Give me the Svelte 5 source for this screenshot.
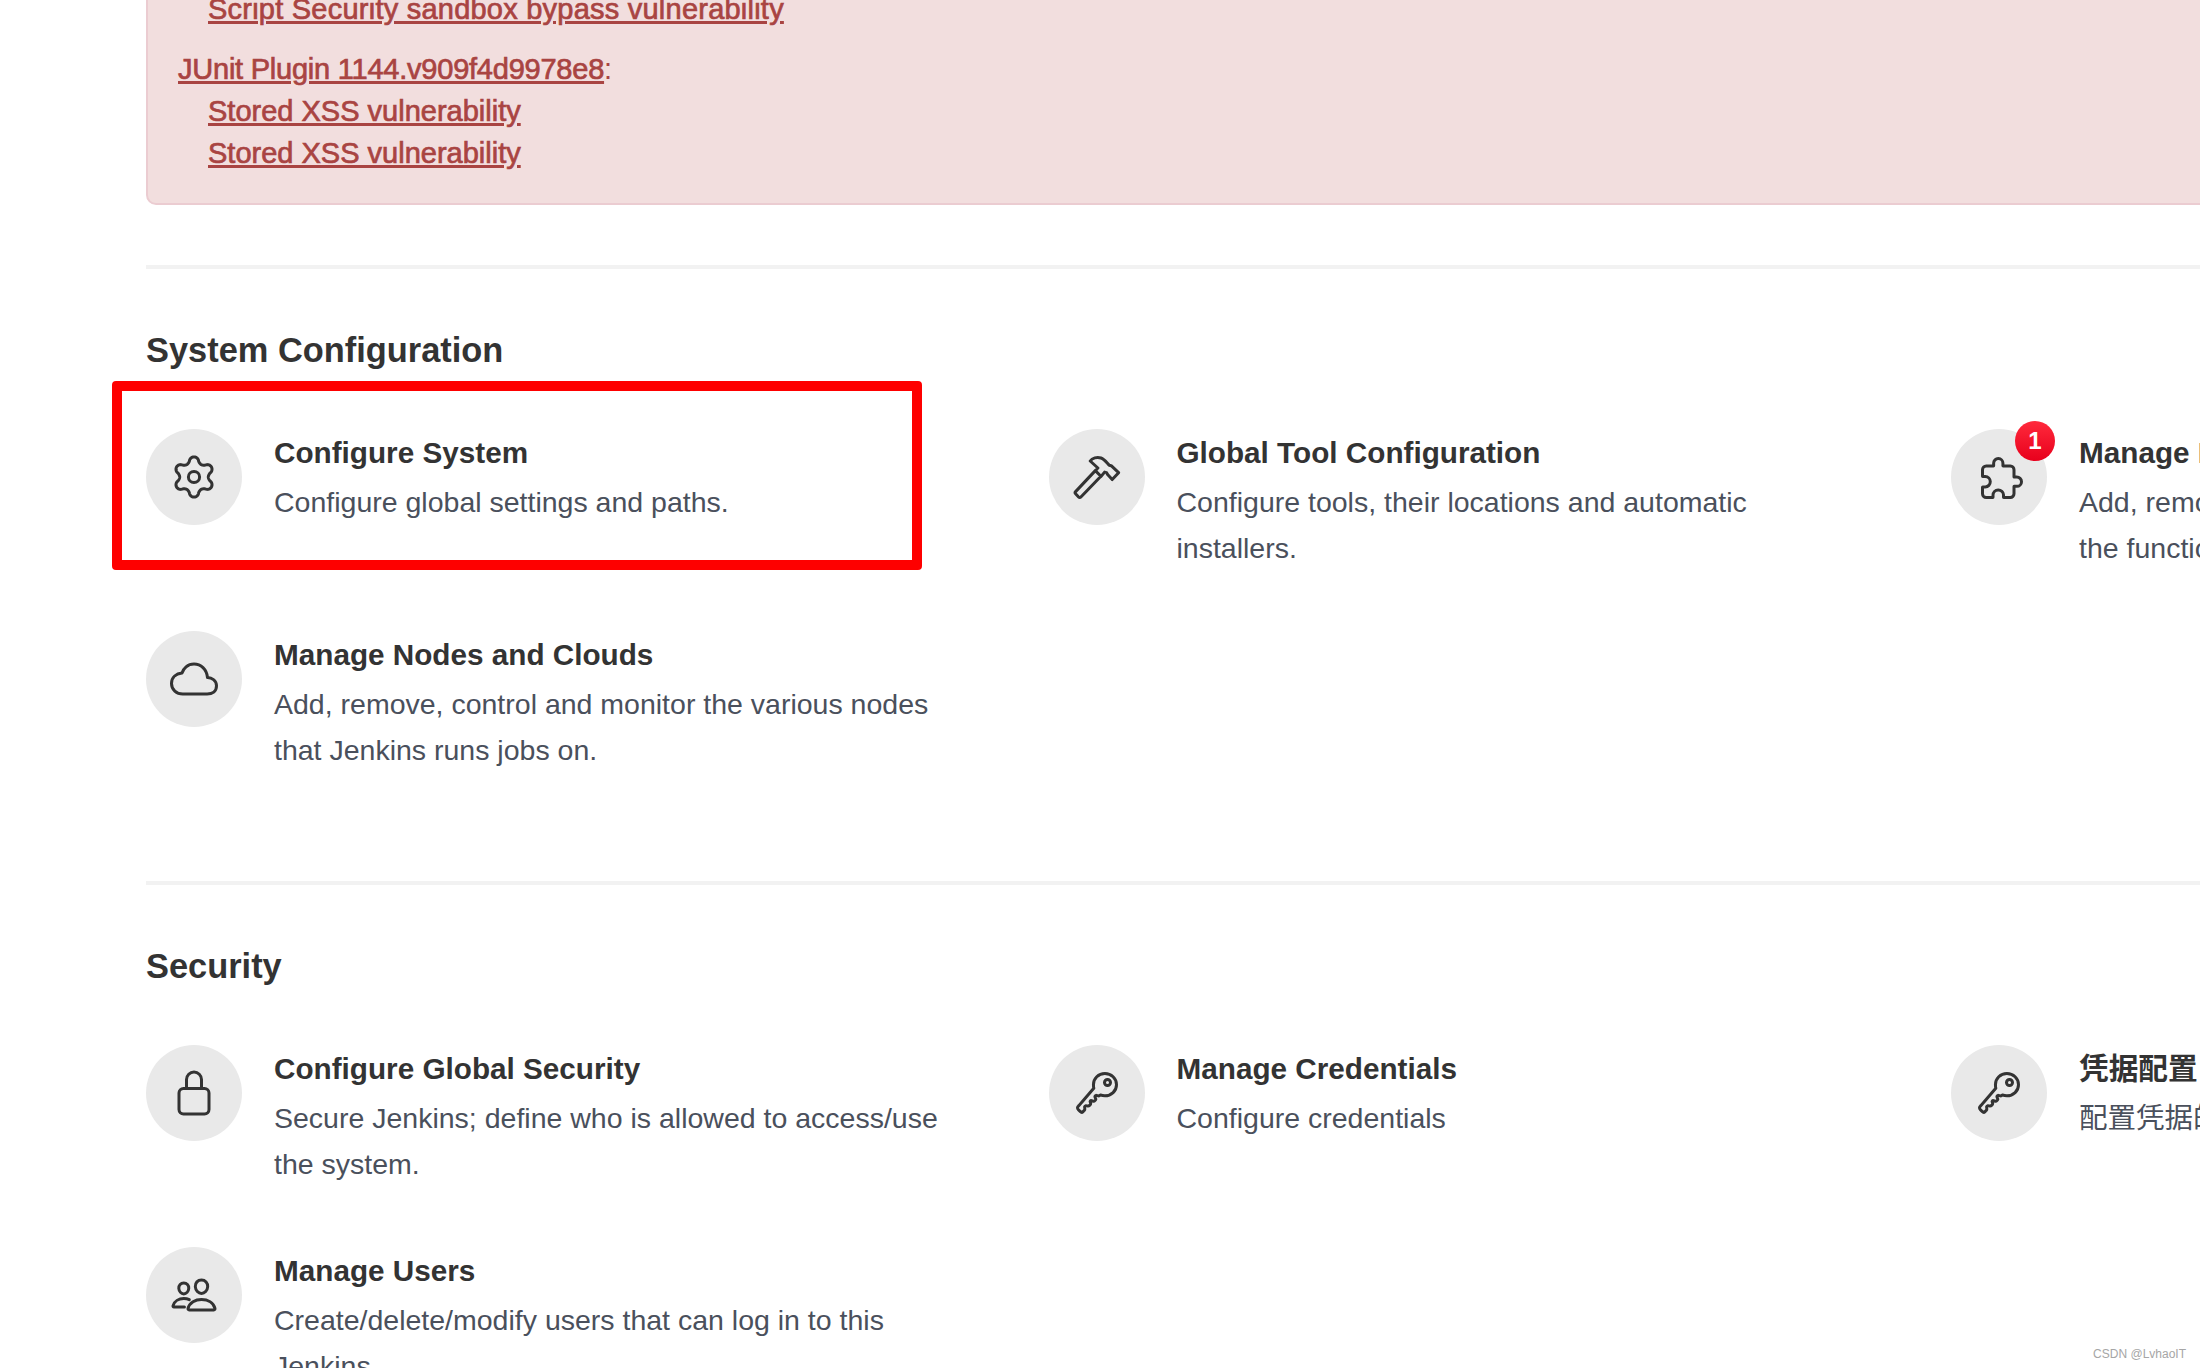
<script>
  const gear = (() => {
    const pts = [];
    for (let i = 0; i < 240; i++) {
      const t = (i / 240) * Math.PI * 2;
      const c = Math.cos(6 * t);
      const s = Math.sign(c) * Math.pow(Math.abs(c), 0.7);
      const r = 17.2 + 2.9 * s;
      pts.push((24 + r * Math.sin(t)).toFixed(2) + ' ' + (24 - r * Math.cos(t)).toFixed(2));
    }
    return 'M' + pts.join('L') + 'Z';
  })();

  const sections = [
    {
      name: 'System Configuration',
      items: [
        { icon: 'gear', title: 'Configure System', desc: 'Configure global settings and paths.' },
        { icon: 'hammer', title: 'Global Tool Configuration', desc: 'Configure tools, their locations and automatic installers.' },
        { icon: 'puzzle', badge: '1', title: 'Manage Plugins', desc: 'Add, remove, disable or enable plugins that extend the functionality of Jenkins.' },
        { icon: 'cloud', title: 'Manage Nodes and Clouds', desc: 'Add, remove, control and monitor the various nodes that Jenkins runs jobs on.' }
      ]
    },
    {
      name: 'Security',
      items: [
        { icon: 'lock', title: 'Configure Global Security', desc: 'Secure Jenkins; define who is allowed to access/use the system.' },
        { icon: 'key', title: 'Manage Credentials', desc: 'Configure credentials' },
        { icon: 'key', title: '凭据配置', desc: '配置凭据的提供者' },
        { icon: 'people', title: 'Manage Users', desc: 'Create/delete/modify users that can log in to this Jenkins' }
      ]
    }
  ];
</script>

<div class="viewport">
  <main class="page">
    <div class="alert">
      <div class="group">
        <div class="indent"><a class="wide" href="#a">Script Security sandbox bypass vulnerability</a></div>
      </div>
      <div class="group">
        <div><a class="tight" href="#b">JUnit Plugin 1144.v909f4d9978e8</a>:</div>
        <div class="indent"><a href="#c">Stored XSS vulnerability</a></div>
        <div class="indent"><a href="#d">Stored XSS vulnerability</a></div>
      </div>
    </div>

    {#each sections as section}
      <section class="section">
        <h2>{section.name}</h2>
        <div class="grid">
          {#each section.items as item}
            <div class="item">
              <div class="disc">
                {#if item.icon === 'gear'}
                  <svg viewBox="0 0 48 48"><path d={gear} /><circle cx="24" cy="24" r="5.6" /></svg>
                {:else if item.icon === 'hammer'}
                  <svg viewBox="0 0 48 48"><path d="M2.6 38.6a1.6 1.6 0 0 0 0 2.2l3 3.2a1.6 1.6 0 0 0 2.3 0l20-20.8-5.6-5.6zM22.3 17.6l2.6-2.6L17.2 8c2-3 6.800-4.400 10.800-3 3.200 1.100 5.200 4 8.200 7.200l2 .5 7.400 7-6.400 6.900-4.600-5-1-2-2-.5-3.700 4.500" /></svg>
                {:else if item.icon === 'puzzle'}
                  <svg viewBox="0 0 512 512" class="ion puzzle"><path d="M413.66 246.1H386a2 2 0 01-2-2v-77.24A38.86 38.86 0 00345.14 128H267.9a2 2 0 01-2-2V98.34c0-27.14-21.5-49.86-48.64-50.33a49.53 49.53 0 00-50.4 49.51V126a2 2 0 01-2 2H87.62A39.74 39.74 0 0048 167.62V238a2 2 0 002 2h26.91c29.37 0 53.68 25.48 54.09 54.85.42 29.87-23.51 57.15-53.29 57.15H50a2 2 0 00-2 2v70.38A39.74 39.74 0 0087.62 464H158a2 2 0 002-2v-20.93c0-30.28 24.75-56.35 55-57.06 30.1-.7 57 20.31 57 50.28V462a2 2 0 002 2h71.14A38.86 38.86 0 00384 425.14v-78a2 2 0 012-2h28.48c27.63 0 49.52-22.67 49.52-50.4s-23.2-48.64-50.34-48.64z" /></svg>
                {:else if item.icon === 'cloud'}
                  <svg viewBox="0 0 512 512" class="ion"><path d="M400 240c-8.890-89.540-71-144-144-144-69 0-113.440 48.200-128 96C68 198 16 235.590 16 304c0 66 54 112 120 112h260c55 0 100-27.440 100-88 0-59.820-53-85.760-96-88z" /></svg>
                {:else if item.icon === 'lock'}
                  <svg viewBox="0 0 512 512" class="ion"><path d="M336 208v-95a80 80 0 00-160 0v95" /><rect x="96" y="208" width="320" height="272" rx="48" ry="48" /></svg>
                {:else if item.icon === 'key'}
                  <svg viewBox="0 0 512 512" class="ion"><path d="M218.100 167.170c0 13 0 25.600 4.100 37.400-43.100 50.600-156.900 184.300-167.500 194.500a20.170 20.170 0 00-6.700 15c0 8.500 5.200 16.700 9.600 21.300 6.600 6.900 34.800 33 40 28 15.400-15 18.500-19 24.800-25.200 9.500-9.300-1-28.300 2.300-36s6.800-9.200 12.500-10.400 15.800 2.900 23.700 3c8.300.1 12.800-3.400 19-9.200 5-4.600 8.600-8.900 8.700-15.600.2-9-12.800-20.900-3.100-30.400s23.700 6.200 34 5 22.800-15.500 24.100-21.600-11.700-21.800-9.700-30.700c.7-3 6.800-10 11.400-11s25 6.900 29.600 5.900c5.600-1.200 12.100-7.100 17.400-10.400 15.500 6.700 29.600 9.400 47.700 9.400 68.500 0 124-53.400 124-119.200S408.500 48 340 48s-121.900 53.370-121.900 119.170zM400 144a32 32 0 11-32-32 32 32 0 0132 32z" /></svg>
                {:else if item.icon === 'people'}
                  <svg viewBox="0 0 512 512" class="ion"><path d="M402 168c-2.930 40.670-33.100 72-66 72s-63.120-31.320-66-72c-3-42.310 26.370-72 66-72s69 30.460 66 72z" /><path d="M336 304c-65.170 0-127.840 32.370-143.540 95.410-2.080 8.340 3.150 16.590 11.720 16.590h263.650c8.570 0 13.770-8.250 11.720-16.590C463.850 335.360 401.180 304 336 304z" /><path d="M200 185.940c-2.340 32.480-26.720 58.060-53 58.060s-50.700-25.570-53-58.060C91.610 152.150 115.340 128 147 128s55.390 24.770 53 57.940z" /><path d="M206 306c-18.050-8.270-37.930-11.450-59-11.450-52 0-102.100 25.850-114.650 76.200-1.650 6.660 2.530 13.250 9.370 13.250H154" /></svg>
                {/if}
                {#if item.badge}<span class="badge">{item.badge}</span>{/if}
              </div>
              <div class="body">
                <div class="title">{item.title}</div>
                <div class="desc">{item.desc}</div>
              </div>
            </div>
          {/each}
        </div>
      </section>
    {/each}
  </main>
  <div class="highlight"></div>
  <div class="watermark">CSDN @LvhaoIT</div>
</div>

<style>
  :global(body) {
    margin: 0;
    background: #fff;
  }
  .viewport {
    position: relative;
    width: 2200px;
    height: 1368px;
    overflow: hidden;
    background: #fff;
    font-family: "Liberation Sans", "Noto Sans CJK SC", sans-serif;
  }
  .page {
    width: 2707px;
    margin: -45px 0 0 146px;
  }
  .alert {
    box-sizing: border-box;
    height: 250px;
    padding: 31px 30px 30px;
    border: 2px solid #ebccd1;
    border-radius: 10px;
    background: #f2dede;
    color: #a94442;
    font-size: 29px;
    line-height: 42px;
    display: flex;
    flex-direction: column;
    gap: 18px;
  }
  .alert a {
    color: #a94442;
    text-decoration: underline;
    text-decoration-thickness: 2.5px;
    -webkit-text-stroke: 0.7px #a94442;
  }
  .alert a.wide {
    letter-spacing: 0.23px;
  }
  .alert a.tight {
    letter-spacing: -0.23px;
  }
  .indent {
    padding-left: 30px;
  }
  .section {
    margin-top: 60px;
    border-top: 4px solid #f2f2f2;
    padding-top: 56px;
    height: 616px;
    box-sizing: border-box;
  }
  .section + .section {
    margin-top: 0;
    padding-top: 56px;
  }
  h2 {
    margin: 0 0 54px;
    font-size: 34.4px;
    line-height: 50px;
    font-weight: 700;
    color: #333;
  }
  .grid {
    display: grid;
    grid-template-columns: repeat(3, 902.5px);
    row-gap: 58px;
  }
  .item {
    display: flex;
    gap: 32px;
    min-height: 144px;
  }
  .disc {
    position: relative;
    flex: none;
    width: 96px;
    height: 96px;
    border-radius: 50%;
    background: #e9e9e9;
    display: flex;
    align-items: center;
    justify-content: center;
  }
  svg {
    width: 48px;
    height: 48px;
    fill: none;
    stroke: #333;
    stroke-width: 3;
    stroke-linecap: round;
    stroke-linejoin: round;
  }
  svg.ion {
    stroke-width: 32;
  }
  svg.puzzle {
    margin: 2px 0 0 6px;
  }
  .badge {
    position: absolute;
    top: -8px;
    right: -8px;
    width: 40px;
    height: 40px;
    border-radius: 50%;
    background: linear-gradient(#ff2a3c, #e8001c);
    color: #fff;
    font-size: 24px;
    font-weight: 700;
    line-height: 40px;
    text-align: center;
  }
  .body {
    width: 680px;
  }
  .title {
    margin-top: 4px;
    font-size: 29.7px;
    line-height: 40px;
    font-weight: 700;
    color: #333;
  }
  .desc {
    margin-top: 6px;
    font-size: 28.5px;
    line-height: 46px;
    color: #4a505c;
  }
  .highlight {
    position: absolute;
    left: 112px;
    top: 381px;
    width: 810px;
    height: 189px;
    box-sizing: border-box;
    border: 10px solid #fe0000;
    border-radius: 4px;
  }
  .watermark {
    position: absolute;
    right: 14px;
    bottom: 6px;
    font-size: 12px;
    line-height: 16px;
    color: #a6a6a6;
  }
</style>
